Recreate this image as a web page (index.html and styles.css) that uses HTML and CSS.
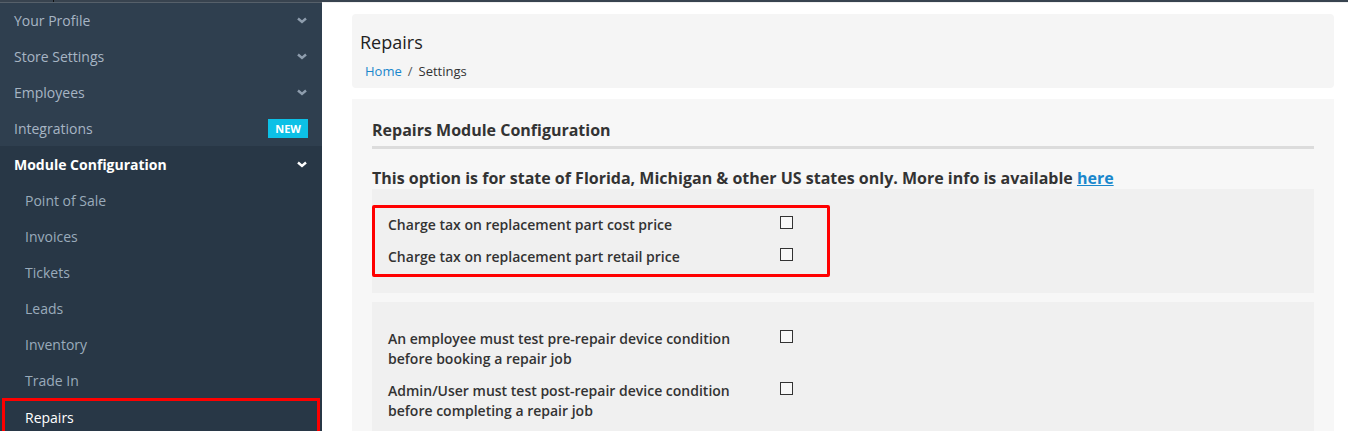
FILE: index.html
```html
<!DOCTYPE html>
<html>
<head>
<meta charset="utf-8">
<link rel="stylesheet" href="styles.css">
</head>
<body>
<div class="topbar"><span class="tick"></span></div>
<div class="layout">
  <nav class="sidebar">
    <div class="group-top">
      <div class="nav-item"><span>Your Profile</span><svg class="chev" viewBox="0 0 10 7"><path d="M1 1.5 L5 5 L9 1.5" /></svg></div>
      <div class="nav-item"><span>Store Settings</span><svg class="chev" viewBox="0 0 10 7"><path d="M1 1.5 L5 5 L9 1.5" /></svg></div>
      <div class="nav-item"><span>Employees</span><svg class="chev" viewBox="0 0 10 7"><path d="M1 1.5 L5 5 L9 1.5" /></svg></div>
      <div class="nav-item"><span>Integrations</span><span class="badge">NEW</span></div>
    </div>
    <div class="group-open">
      <div class="nav-item open"><span>Module Configuration</span><svg class="chev white" viewBox="0 0 10 7"><path d="M1 1.5 L5 5 L9 1.5" /></svg></div>
      <div class="nav-sub">Point of Sale</div>
      <div class="nav-sub">Invoices</div>
      <div class="nav-sub">Tickets</div>
      <div class="nav-sub">Leads</div>
      <div class="nav-sub">Inventory</div>
      <div class="nav-sub">Trade In</div>
      <div class="nav-sub active">Repairs</div>
    </div>
  </nav>
  <main class="main">
    <section class="page-head">
      <h1 class="page-title">Repairs</h1>
      <div class="crumbs"><a class="crumb-link">Home</a><span class="sep">/</span><span>Settings</span></div>
    </section>
    <section class="card">
      <h2 class="card-title">Repairs Module Configuration</h2>
      <p class="notice">This option is for state of Florida, Michigan &amp; other US states only. More info is available <a class="link">here</a></p>
      <div class="panel panel-tax">
        <div class="highlight">
          <div class="opt-row"><span class="opt-label">Charge tax on replacement part cost price</span><span class="check"></span></div>
          <div class="opt-row"><span class="opt-label">Charge tax on replacement part retail price</span><span class="check"></span></div>
        </div>
      </div>
      <div class="panel panel-test">
        <div class="opt-row tall"><span class="opt-label">An employee must test pre-repair device condition<br>before booking a repair job</span><span class="check"></span></div>
        <div class="opt-row tall"><span class="opt-label">Admin/User must test post-repair device condition<br>before completing a repair job</span><span class="check"></span></div>
      </div>
    </section>
  </main>
</div>
</body>
</html>
```
FILE: styles.css
```css
* { box-sizing: border-box; }
html, body { margin: 0; padding: 0; }
body {
  font-family: "Open Sans", "Noto Sans", sans-serif;
  background: #ffffff;
  color: #333;
  height: 431px;
  overflow: hidden;
}
.topbar {
  height: 2px;
  background: #38434f;
  position: relative;
}
.tick {
  position: absolute;
  left: 53px;
  top: 0;
  width: 1px;
  height: 2px;
  background: #111;
}
.layout {
  display: flex;
  height: 429px;
}
.sidebar {
  width: 322px;
  flex: none;
  background: #283746;
  display: flex;
  flex-direction: column;
}
.group-top {
  background: #2f3f4f;
  border-top: 1px solid #56606a;
}
.nav-item {
  height: 36px;
  display: flex;
  align-items: center;
  justify-content: space-between;
  padding: 0 14px 0 14px;
  font-size: 14px;
  color: #a7b5c4;
}
.group-top .nav-item:first-child { height: 35px; }
.chev {
  width: 10px;
  height: 7px;
  fill: none;
  stroke: #8e9dad;
  stroke-width: 2.4;
  margin-right: 1px;
}
.chev.white { stroke: #ffffff; }
.badge {
  background: #0cc0e6;
  color: #fff;
  font-size: 11px;
  font-weight: 700;
  padding: 0 7px;
  height: 19px;
  line-height: 19px;
}
.nav-item.open {
  color: #ffffff;
  font-weight: 700;
}
.nav-sub {
  height: 36px;
  display: flex;
  align-items: center;
  padding-left: 25px;
  font-size: 14px;
  color: #9aabbb;
}
.nav-sub.active {
  color: #ffffff;
  margin: 0 2px;
  padding-left: 20px;
  border: 3px solid #ff0000;
  border-bottom: none;
  height: 35px;
}
.main {
  flex: 1;
  padding: 11px 14px 0 30px;
  display: flex;
  flex-direction: column;
  gap: 11px;
  overflow: hidden;
  border-top: 1px solid #f0f0f0;
}
.page-head {
  flex: none;
  background: #f5f5f5;
  border-radius: 4px;
  height: 74px;
  padding: 16px 8px 0 8px;
}
.page-title {
  margin: 0;
  font-size: 18px;
  font-weight: 400;
  color: #222;
  line-height: 24px;
}
.crumbs {
  margin-top: 8px;
  padding-left: 5px;
  font-size: 13px;
  color: #333;
  line-height: 18px;
}
.crumb-link { color: #1a87cc; }
.sep { margin: 0 6px; color: #555; }
.card {
  flex: none;
  background: #f7f7f7;
  padding: 19px 20px 0 20px;
  height: 400px;
}
.card-title {
  margin: 0;
  font-size: 16px;
  font-weight: 700;
  color: #333;
  line-height: 24px;
  padding-bottom: 4px;
  border-bottom: 3px solid #dcdcdc;
}
.notice {
  margin: 18px 0 0 0;
  font-size: 16px;
  font-weight: 700;
  color: #333;
  line-height: 22px;
}
.link {
  color: #1a87cc;
  text-decoration: underline;
}
.panel {
  background: #f0f0f0;
}
.panel-tax {
  height: 104px;
  padding-top: 16px;
}
.highlight {
  width: 458px;
  border: 3px solid #ff0000;
  border-radius: 2px;
  padding: 0 0 2px 13px;
}
.opt-row {
  display: flex;
  align-items: center;
  height: 32px;
  font-size: 14px;
  font-weight: 600;
  color: #333;
}
.opt-label {
  width: 392px;
  flex: none;
}
.check {
  width: 13px;
  height: 13px;
  border: 1px solid #333;
  background: #f8f8f8;
  margin-top: -4px;
}
.panel-test {
  margin-top: 9px;
  padding: 27px 0 0 16px;
  height: 200px;
}
.opt-row.tall {
  align-items: flex-start;
  height: 52px;
  line-height: 20px;
}
.opt-row.tall .check { margin-top: 1px; }
```
